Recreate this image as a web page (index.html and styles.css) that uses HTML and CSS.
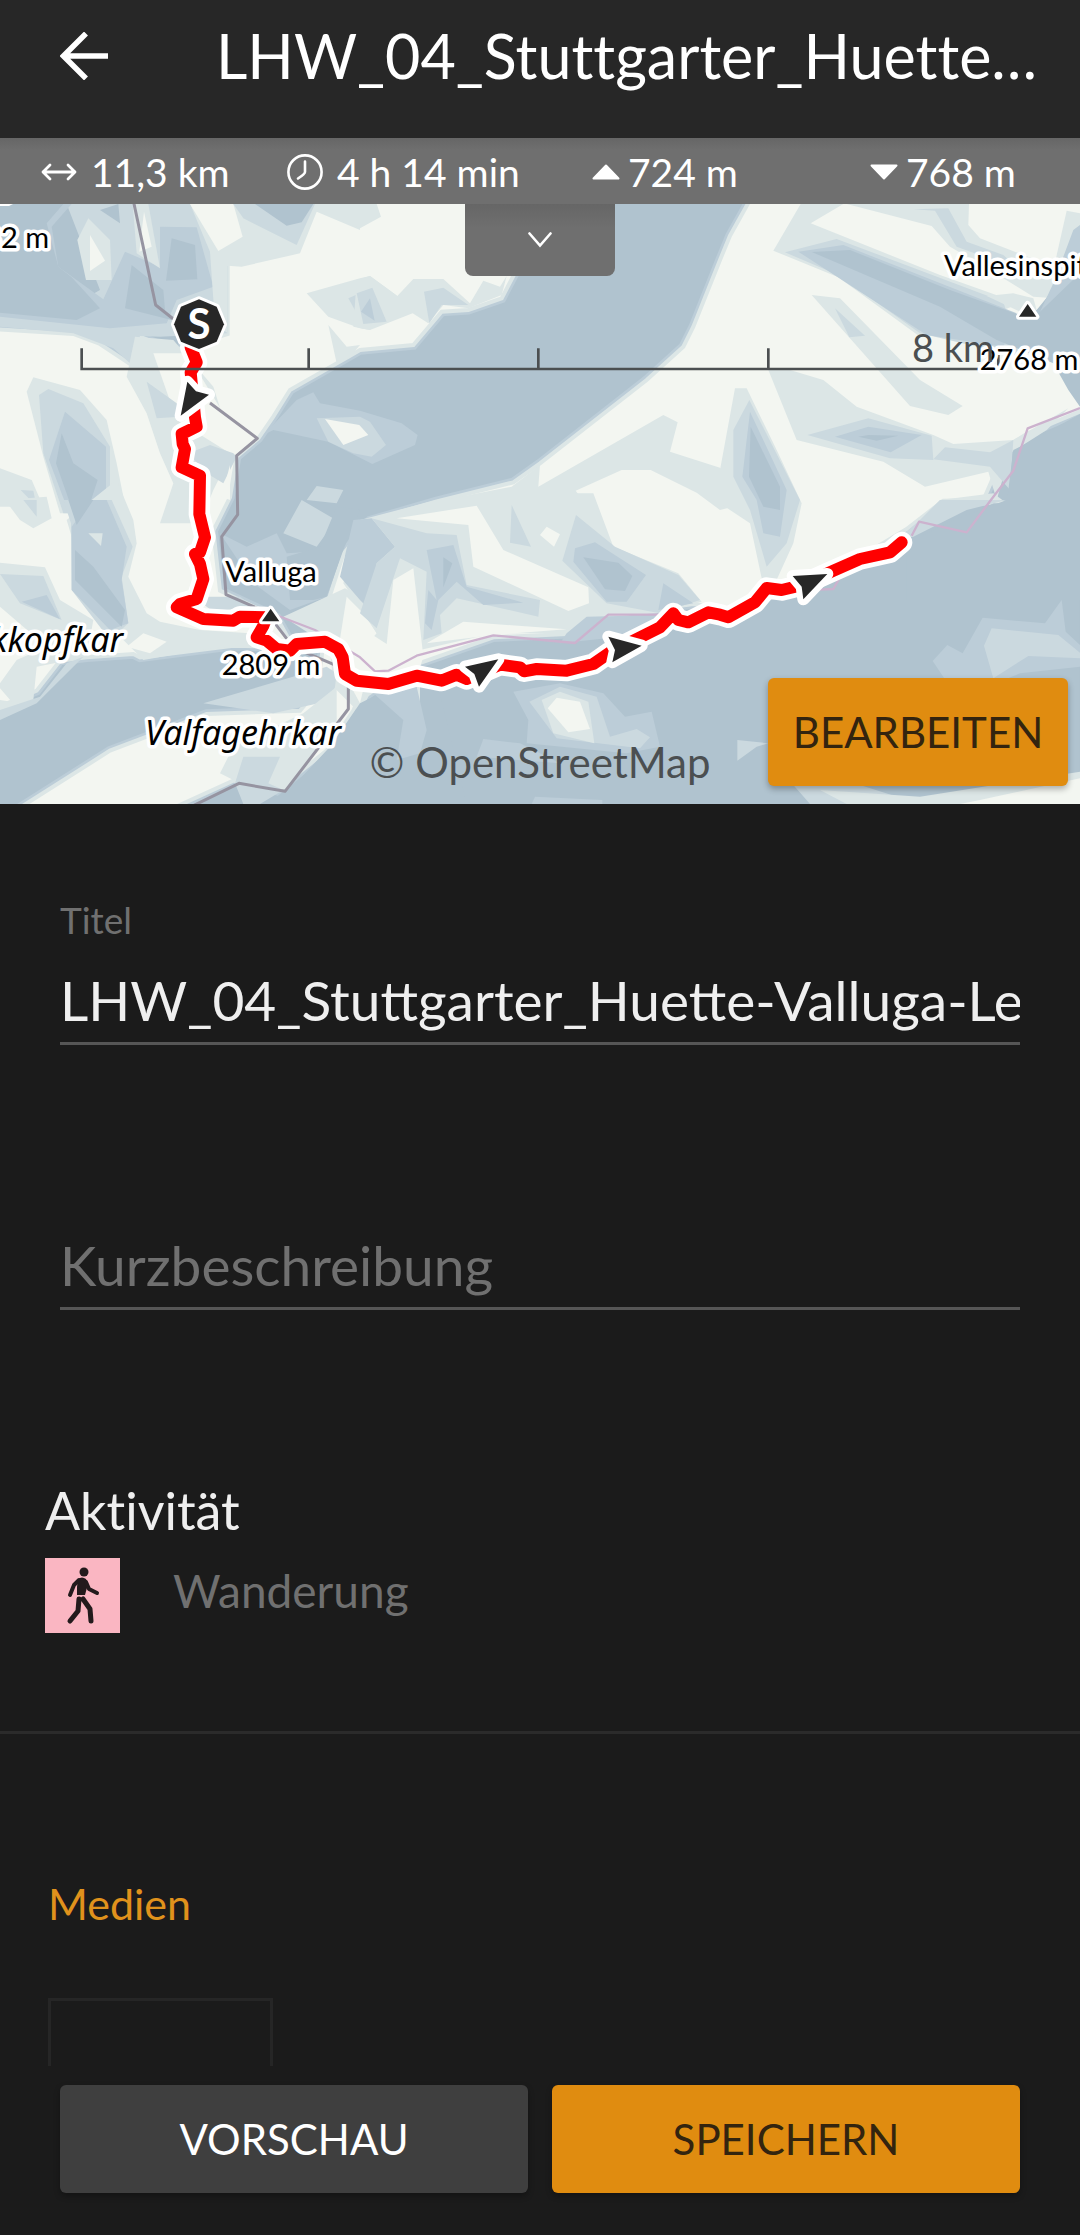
FILE: index.html
```
<!DOCTYPE html>
<html lang="de">
<head>
  <meta charset="UTF-8">
  <meta name="viewport" content="width=device-width, initial-scale=1.0">
  <title>Tour bearbeiten</title>
  <link rel="stylesheet" href="styles.css">
</head>
<body>
  <header class="topbar">
    <button class="back" type="button" aria-label="Zurück">
      <svg viewBox="0 0 48 48" width="48" height="48"><path d="M26 1.500 3.500 24 26 46.500M3.500 24H48" fill="none" stroke="#fff" stroke-width="5.500"/></svg>
    </button>
    <h1>LHW_04_Stuttgarter_Huette-Valluga-Leutkircher_Huette</h1>
  </header>

  <ul class="stats">
    <li>
      <svg class="icon-wide" viewBox="0 0 36 18" width="36" height="18"><path d="M9 2 2 9l7 7M27 2l7 7-7 7M2 9h32" fill="none" stroke="#fff" stroke-width="2.800" stroke-linecap="round" stroke-linejoin="round"/></svg>
      11,3 km
    </li>
    <li>
      <svg class="icon-wide" viewBox="0 0 36 36" width="36" height="36"><circle cx="18" cy="18" r="16.600" fill="none" stroke="#fff" stroke-width="2.600"/><path d="M18 7.500V18q0 2-7 6.500" fill="none" stroke="#fff" stroke-width="2.600" stroke-linecap="round"/></svg>
      4 h 14 min
    </li>
    <li>
      <svg viewBox="0 0 28 16" width="28" height="16"><path d="M14 1.500 26.500 14.500H1.500z" fill="#fff" stroke="#fff" stroke-width="2" stroke-linejoin="round"/></svg>
      724 m
    </li>
    <li>
      <svg viewBox="0 0 28 16" width="28" height="16"><path d="M14 14.500 26.500 1.500H1.500z" fill="#fff" stroke="#fff" stroke-width="2" stroke-linejoin="round"/></svg>
      768 m
    </li>
  </ul>

  <section class="map">
    <svg class="map-canvas" viewBox="0 0 1080 600" preserveAspectRatio="xMidYMid slice" role="img" aria-label="Karte der Tour">
      <defs>
        <path id="land-west" d="M-30 375 220 390 300 420 390 480 420 398 520 440 683 390 683 185 640 100 570-30H1400L1540 216 1505 283 1405 318 1325 323 1240 423 1080 438 1045 458 870 558 820 638 775 703 710 758 690 880 640 980 660 1160 830 1240 880 1330 700 1325 420 1360 400 1350 260 1360 180 1370 110 1460-30 1520z"/>
        <path id="land-east" d="M985 1190 1030 1050 1110 950 1310 892 1540 835 1620 778 1940 528 2050 428 2080 368 2160 168 2190 95 2260-30H3270V610L3080 690 3020 728 2950 888 2830 890 2720 975 2520 1095 2290 1160 2180 1215 2080 1200 1900 1225 1820 1240 1700 1290 1480 1300 1250 1380 1240 1400 1260 1480 1240 1540 1180 1450 1120 1460 1060 1500 1000 1440 960 1400z"/>
        <path id="land-south" d="M30 1830 330 1640 620 1530 900 1520 1000 1400 1080 1470 1060 1520 980 1640 830 1760 700 1730 480 1830z"/>
        <path id="route" d="M572 430 590 475 572 505 585 640 590 668 545 690 548 720 555 735 545 790 600 815 598 930 615 1000 600 1045 585 1050 600 1080 610 1125 590 1185 540 1200 530 1210 610 1245 700 1250 720 1238 800 1240 790 1265 770 1300 800 1310 830 1335 870 1340 890 1320 975 1313 1015 1335 1028 1360 1035 1410 1070 1430 1165 1440 1250 1415 1325 1430 1370 1412 1400 1425 1500 1382 1560 1390 1572 1402 1610 1395 1700 1400 1780 1380 1830 1345 1920 1300 1980 1270 2020 1228 2035 1248 2065 1255 2125 1225 2160 1232 2185 1240 2265 1195 2300 1152 2345 1158 2400 1145 2500 1100 2580 1065 2670 1045 2705 1015"/>
      </defs>

      <!-- terrain, drawn at three units per pixel -->
      <g transform="scale(.333333)">
        <path class="t4" d="M0 0H3240V1800H0z"/>
        <g class="edge-outer"><use href="#land-west"/><use href="#land-east"/><use href="#land-south"/></g>
        <g class="edge-inner"><use href="#land-west"/><use href="#land-east"/><use href="#land-south"/></g>

        <!-- north west -->
        <g transform="translate(0 -42)">
          <path class="t2" d="M200 42H570L630 170 683 227V430L480 440 420 438 390 520 340 475 220 430 0 410V360L220 345 300 300z"/>
          <path class="t3" d="M0 42H215L155 110 175 230 310 328 375 185 480 230V110L590 112 640 290 530 330 500 400 330 415 0 380z"/>
          <path class="t4" d="M0 42H190L140 100 175 230 215 262 300 355 230 390 0 368z"/>
          <path class="t4" d="M300 60 355 42 360 100zM395 225 490 300 495 360 515 390 375 355zM515 145 585 165 592 268 498 272z"/>
          <path class="t1" d="M265 85 330 150 335 270H258L232 150z"/>
          <path class="t0" d="M270 135 315 212 270 243z"/>
          <path class="t1" d="M398 42H445L480 235 410 190z"/>
          <path class="t0" d="M432 65 455 170 418 185z"/>
          <path class="t1" d="M570 42 630 185 645 400 683 430V227L725 230 900 190 950 65 1080 120V42H720z"/>
          <path class="t0" d="M570 42H700L728 140 655 183z"/>
          <path class="t2" d="M700 42 730 85 890 165 945 42z"/>
          <path class="t4" d="M765 42 860 107 905 97 940 42z"/>
          <path class="t1" d="M920 310 1080 265 1110 258 1192 318 1160 370 1110 420 1080 415 985 380zM985 405 1040 470 1080 465 1050 500 1010 520z"/>
          <path class="t2" d="M1045 325 1117 293 1160 395 1090 402 1070 370z"/>
          <path class="t1" d="M405 440 520 450 640 590 700 780 640 900 600 1000H480L520 880 480 790 440 670 380 560z"/>
          <path class="t0" d="M460 490H560L640 620 735 780 690 790 530 690z"/>
          <path class="t2" d="M440 575 530 640 540 680 470 685zM565 790 630 765 700 790 710 800 670 880 620 850z"/>
          <path class="t0" d="M690 825V930L665 920z"/>
          <path class="t1" d="M100 562 240 600 320 690 350 820 380 970H180L130 800 80 605z"/>
          <path class="t2" d="M145 597 250 640 330 770V970H190L130 790 117 615z"/>
          <path class="t3" d="M195 665 318 770V950H200L147 810z"/>
          <path class="t4" d="M185 730 220 820 293 870 270 940H210L168 820z"/>
          <path class="t1" d="M0 835 95 870 130 950H0z"/>
          <path class="t2" d="M62 900 100 902 110 950z"/>
          <path class="t3" d="M790 735 890 630 940 607 960 640 1080 662 1205 700 1253 735 1245 765 1117 822 985 755 820 720z"/>
          <path class="t2" d="M950 685 1080 680 1110 695 1158 765 1115 800 1060 790 985 755zM920 930 950 888 1030 900 1010 940z"/>
          <path class="t0" d="M975 687 1078 705 1105 735 1030 765z"/>
        </g>

        <!-- north, the wide valley -->
        <g transform="translate(1080 -42)">
          <path class="t1" d="M-60 42H50L63 80 0 115-60 90zM-10 270 30 258 112 318 160 267H250L330 340 370 272 420 290 440 258 425 315 325 355 250 345 205 400 158 370 30 420-20 410z"/>
          <path class="t2" d="M-10 310 37 293 80 395 10 402zM192 305 250 293 325 345 245 345 208 400z"/>
          <path class="t3" d="M3 365 30 325 44 392z"/>
          <path class="t1" d="M535 890 910 675 953 697 930 785 1080 833 1200 930 1080 960 1010 908 872 840H785L647 902 720 1000H300L250 930 455 890 540 825z"/>
        </g>

        <!-- north east -->
        <g transform="translate(2160 -42)">
          <path class="t1" d="M242 42H370L272 100 660 255 900 340 850 360 600 440 355 262 160 182z"/>
          <path class="t1" d="M380 42H747L745 105 780 145 1080 260V330L940 320 810 240 690 170 635 108z"/>
          <path class="t2" d="M580 58 685 55 740 155 850 195 900 240 710 170 645 62zM195 187 350 147 850 335 900 500 600 430 355 255z"/>
          <path class="t3" d="M235 185 370 165 890 370 850 470 620 435z"/>
          <path class="t4" d="M275 186 390 180 690 300 890 372 950 360 1080 200V650L1045 600 1000 520 830 450 660 350z"/>
          <path class="t1" d="M1040 62 1080 70V150L1000 240z"/>
          <path class="t3" d="M1060 120 1080 105V250L960 365 1000 280z"/>
          <path class="t1" d="M800 318 880 310 940 325 950 360 900 365z"/>
          <path class="t1" d="M275 315 360 325 600 570 728 648 685 675 570 648z"/>
          <path class="t2" d="M345 355 435 437 388 442z"/>
          <path class="t1" d="M145 540H210L310 570 410 650 640 735 700 762 880 750 1045 655 980 720 870 790 830 930 805 845 615 890 490 815 230 750z"/>
          <path class="t2" d="M262 735 445 685 635 737 640 810 510 805zM640 808 675 772 810 787 880 750 870 900 810 830z"/>
          <path class="t3" d="M345 740 445 710 605 735 512 787z"/>
          <path class="t4" d="M415 740 445 735 535 737 470 752z"/>
          <path class="t1" d="M45 595H80L170 780 245 940 220 1060 140 1235 90 1000 0 940V840z"/>
          <path class="t2" d="M88 630 240 930 200 1060 140 1130 90 960 40 860V720z"/>
          <path class="t3" d="M90 665 200 900 180 1040 130 1030 110 930 67 860z"/>
          <path class="t4" d="M92 710 180 890V960L130 950 87 860z"/>
          <path class="t1" d="M660 930 820 910 860 940 640 960z"/>
          <path class="t4" d="M860 940 880 780 920 760 1080 672V1000H700L820 940z"/>
        </g>

        <!-- south west -->
        <g transform="translate(0 888)">
          <path class="t1" d="M15 0 60 60 100 85 155 55 140-10zM0 188 135 202 180 300 280 360 260 470 110 500 100 600 0 650V600L35 605 0 565V550L50 480 140 440 0 320zM350-60 400 60 410 130 385 230 440 340 480 365 600 390 750 400 850 420 600 450 430 480 370 420 280 330 200 60z"/>
          <path class="t0" d="M380 440 430 400 500 425 450 460z"/>
          <path class="t2" d="M70 0H110V50zM0 222 130 228 185 360 60 310zM190 0H335L398 140 365 230 385 370 330 420 215 270 213 70z"/>
          <path class="t3" d="M65 305 140 285 180 358zM215 80 275 0 320 0 380 140 365 240 385 370 330 390 215 270z"/>
          <path class="t4" d="M205 0H280L230 75zM225 150 280 200 375 330 365 380 225 240z"/>
          <path class="t1" d="M265 100H308L303 138z"/>
          <path class="t3" d="M660 100 740 140 830 100 860 160 1028 150 980 290 870 330 760 250z"/>
          <path class="t2" d="M905 0 1008 60 950 140 850 100zM580 290H720L760 320 640 335z"/>
          <path class="t4" d="M1010 20 1080 30 1030 150 980 290 940 300 870 300 860 170 960 140z"/>
          <path class="t1" d="M1035 265 1150 330V500L1080 640 1000 560 990 440 850 350z"/>
          <path class="t0" d="M1040 290 1100 350 1130 400 1080 610 1010 480z"/>
          <path class="t2" d="M0 630 120 590 200 490 250 470 110 610 0 660zM610 610 980 500 1010 520 1000 600 820 640z"/>
          <path class="t1" d="M660 820 700 740 910 640 1010 560 1010 680 860 870 700 840z"/>
          <path class="t2" d="M730 770 840 770 805 850 850 870 780 912H730L705 850z"/>
          <path class="t4" d="M1080 610 1300 500 1400 912H830L990 740z"/>
        </g>

        <!-- south, up to the ridge -->
        <g transform="translate(1080 888)">
          <path class="t1" d="M0 60 230 0 400-20H700L760 140 955 220 1025 305 890 340 750 350 620 400 400 400 180 450 180 620 80 520-40 500 50 400-50 250z"/>
          <path class="t3" d="M-20 60 35 55 105 140 50 190 35 335 0 300-60 230z"/>
          <path class="t2" d="M35 55 200 100 290 105 320 255 540 300 535 350 290 295 240 345 245 400 190 420 200 215 120 175 50 385 0 340 50 190 105 140z"/>
          <path class="t0" d="M100 240 160 205 190 470 150 600 90 560 40 570-50 480 0 380 80 432z"/>
          <path class="t3" d="M200 150 280 135 320 260 490 308 370 315 290 245 235 300 215 390 195 370 205 270 230 300z"/>
          <path class="t4" d="M250 172 277 190 250 262z"/>
          <path class="t0" d="M110 55 350 17 430 150 685 262 687 310 625 333 340 200 325 75zM560 80 600 103 582 140 540 105zM200 430 310 365 620 388 400 405z"/>
          <path class="t2" d="M455 15 513 140 450 128zM648 45 765 140 955 225 1020 300 900 340 740 310 607 182z"/>
          <path class="t3" d="M645 145 705 127 858 225 800 305H740L640 185zM910 250 1000 310 895 330zM620 400 680 350 900 345 880 400 600 430z"/>
          <path class="t4" d="M670 172 775 188 817 228 795 273 735 268z"/>
          <path class="t3" d="M460 575 600 550 730 580 795 650 875 635 900 740 800 760 500 730 505 660zM40 580 170 560 200 690 180 760 110 780 130 660zM350 770 370 717 480 730 600 790z"/>
          <path class="t2" d="M508 605 600 560 710 590 750 710 830 687 870 712 840 745 590 715z"/>
          <path class="t1" d="M545 600 600 575 685 605 703 730 580 700z"/>
          <path class="t0" d="M563 625 590 593 660 605 690 687 625 697z"/>
          <path class="t3" d="M515 912 525 890 727 900V912z"/>
        </g>

        <!-- south east -->
        <g transform="translate(2160 888)">
          <path class="t2" d="M660 0H860L740 30 580 110 530 120 600 60z"/>
          <path class="t4" d="M860 0H1080V300H560V130L700 60z"/>
          <path class="t3" d="M638 483 682 435 728 460 788 353 975 370 1025 300 1037 395 1080 435V500L900 520 800 560H690z"/>
          <path class="t2" d="M815 385 1015 405 1080 458V475L925 468 820 535 792 437zM52 720 145 730 110 740 52 782z"/>
          <path class="t2" d="M220 855H420L600 912H270z"/>
          <path class="t1" d="M300 870 600 890 1080 815V912H380z"/>
          <path class="t0" d="M780 900 1080 835V912H720z"/>
        </g>
      </g>

      <!-- boundaries, cable cars and the route -->
      <g transform="scale(.333333)" fill="none" stroke-linejoin="round">
        <path class="boundary" d="M400-10 467 303 520 345M630 597 772 703 710 755 713 932 665 998 678 1172 800 1225 880 1330 1045 1400V1515L855 1762 717 1738 580 1805"/>
        <path class="ridge" d="M820 1230 945 1278 1080 1360 1125 1402 1165 1400 1250 1355 1480 1294 1725 1317 1825 1232H2000M2460 1157 2500 1155 2520 1120M2735 995 2757 953 2900 985 2975 885 3040 800 3083 673 3240 612"/>
        <use class="route-casing" href="#route"/>
        <use class="route-line" href="#route"/>
        <path class="scale-line" d="M245 433V495H2995V433M926 433V495M1615 433V495M2305 433V495"/>
        <path class="arrow" d="M562 533 588 562 627 572 542 635zM1395 1388 1495 1366 1437 1448 1423 1410zM1825 1298 1925 1325 1837 1375 1845 1338zM2378 1116 2482 1110 2410 1186 2405 1148z"/>
        <path class="peak" d="M812 1214 838 1252H786zM3083 300 3109 338H3057z"/>
        <path class="start" d="M597 286 650 308 672 361 650 413 597 435 543 413 522 361 543 308z"/>
      </g>
      <text class="start-label" x="199" y="135" text-anchor="middle">S</text>

      <g class="place">
        <text x="49" y="44" text-anchor="end">2632 m</text>
        <text x="271" y="378" text-anchor="middle">Valluga</text>
        <text x="271" y="471" text-anchor="middle">2809 m</text>
        <text x="944" y="72">Vallesinspitze</text>
        <text x="1029" y="166" text-anchor="middle">2768 m</text>
      </g>
      <g class="place field">
        <text x="123" y="448" text-anchor="end">Stockkopfkar</text>
        <text x="243" y="541" text-anchor="middle">Valfagehrkar</text>
      </g>
      <path d="M0 0H13L9 2H0z" fill="#fff"/>
      <text class="map-note small" x="912" y="158">8 km</text>
      <text class="map-note" x="540" y="574" text-anchor="middle">© OpenStreetMap</text>
    </svg>

    <button class="pull-tab" type="button" aria-label="Details anzeigen">
      <svg viewBox="0 0 24 16" width="24" height="16"><path d="M1.500 1.500 12 13.500 22.500 1.500" fill="none" stroke="#fff" stroke-width="2.600" stroke-linecap="round"/></svg>
    </button>
    <button class="btn btn-primary edit" type="button">BEARBEITEN</button>
  </section>

  <main class="content">
    <form class="fields" id="tour">
      <label for="titel">Titel</label>
      <input type="text" id="titel" value="LHW_04_Stuttgarter_Huette-Valluga-Leutkircher_Huette">
      <input type="text" id="kurz" placeholder="Kurzbeschreibung" aria-label="Kurzbeschreibung">
    </form>

    <section class="activity">
      <h2>Aktivität</h2>
      <div class="activity-row">
        <svg viewBox="0 0 75 75" width="75" height="75">
          <path d="M0 0H75V75H0z" fill="#fab6c2"/>
          <circle cx="39" cy="14" r="4.500" fill="#231a1c"/>
          <path d="M33 21q4-3 8 0l2 5-3 11h-8V29z" fill="#231a1c"/>
          <path d="M34 22 29 27 25 37M41 24 44 31 52 35" fill="none" stroke="#231a1c" stroke-width="4" stroke-linecap="round" stroke-linejoin="round"/>
          <path d="M34 41 33 53 25 63M38 41 45 51 46 63" fill="none" stroke="#231a1c" stroke-width="5" stroke-linecap="round" stroke-linejoin="round"/>
        </svg>
        <span>Wanderung</span>
      </div>
    </section>

    <section class="media">
      <h2>Medien</h2>
      <div class="media-slot"></div>
    </section>
  </main>

  <footer class="actions">
    <button class="btn btn-dark" type="button">VORSCHAU</button>
    <button class="btn btn-primary" type="submit" form="tour">SPEICHERN</button>
  </footer>
</body>
</html>
```
FILE: styles.css
```
* {
  box-sizing: border-box;
}
body {
  margin: 0;
  height: 100vh;
  display: flex;
  flex-direction: column;
  background-color: #1b1b1b;
  color: #efefef;
  font-family: Lato, sans-serif;
  font-variant-ligatures: none;
}
h1, h2 {
  margin: 0;
  font-weight: normal;
}
button {
  font-family: inherit;
  border: none;
  cursor: pointer;
}
svg {
  display: block;
  flex: none;
}

/* top bar */
.topbar {
  display: flex;
  align-items: center;
  gap: 108px;
  padding: 16px 24px 42px 60px;
  background-color: #272727;
  color: #fff;
}
.back {
  padding: 0;
  background: none;
}
.topbar h1 {
  flex: 1;
  min-width: 0;
  font-size: 61px;
  line-height: 80px;
  white-space: nowrap;
  overflow: hidden;
  text-overflow: ellipsis;
}

/* tour numbers */
.stats {
  display: grid;
  grid-template-columns: 246fr 305fr 278fr 210fr;
  margin: 0;
  padding: 4px 0 2px 41px;
  list-style: none;
  background: linear-gradient(#666, #6f6f6f 12px);
  color: #fff;
  font-size: 39px;
  line-height: 60px;
}
.stats li {
  display: flex;
  align-items: center;
  gap: 8px;
  white-space: nowrap;
}
.icon-wide {
  margin-right: 6px;
}

/* map */
.map {
  position: relative;
  overflow: hidden;
}
.map-canvas {
  width: 100%;
  height: 600px;
}
.t0 { fill: #f3f6f1; }
.t1 { fill: #dce6e6; }
.t2 { fill: #cbd9df; }
.t3 { fill: #bccdd8; }
.t4 { fill: #b0c3cf; }
.edge-outer {
  fill: #bccdd8;
  stroke: #bccdd8;
  stroke-width: 28;
}
.edge-inner {
  fill: #f3f6f1;
  stroke: #dce6e6;
  stroke-width: 12;
}
.boundary {
  stroke: #9694a1;
  stroke-width: 9;
}
.ridge {
  stroke: #ccb2ce;
  stroke-width: 7;
}
.route-casing {
  stroke: #fff;
  stroke-width: 64;
  stroke-linecap: round;
}
.route-line {
  stroke: #f00;
  stroke-width: 36;
  stroke-linecap: round;
}
.scale-line {
  stroke: #4b4f51;
  stroke-width: 8;
  stroke-linejoin: miter;
}
.arrow,
.peak,
.start {
  fill: #272727;
  stroke: #fff;
  stroke-width: 36;
  paint-order: stroke;
}
.peak,
.start {
  stroke-width: 18;
}
.start-label {
  fill: #fff;
  font-size: 42px;
  font-weight: bold;
}
.place {
  fill: #000;
  stroke: #fff;
  stroke-width: 7px;
  stroke-linejoin: round;
  paint-order: stroke;
  font-size: 29px;
}
.field {
  font-family: "Noto Sans", sans-serif;
  font-size: 34px;
  font-style: italic;
}
.map-note {
  fill: #4b4f51;
  font-size: 42px;
}
.small {
  font-size: 38px;
}
.pull-tab {
  position: absolute;
  top: 0;
  left: 50%;
  width: 150px;
  height: 72px;
  margin-left: -75px;
  display: flex;
  align-items: center;
  justify-content: center;
  border-radius: 0 0 8px 8px;
  background: linear-gradient(#666, #6f6f6f 24px);
}

/* buttons */
.btn {
  height: 108px;
  padding: 4px 24px;
  border-radius: 6px;
  font-size: 42px;
  box-shadow: 0 3px 6px rgba(0, 0, 0, 0.3);
}
.btn-primary {
  background-color: #e08c10;
  color: #33240f;
}
.btn-dark {
  background-color: #3f3f3f;
  color: #fff;
}
.edit {
  position: absolute;
  right: 12px;
  bottom: 18px;
  width: 300px;
}

/* form */
.content {
  flex: 1;
  min-height: 0;
  overflow: hidden;
}
.fields {
  display: flex;
  flex-direction: column;
  padding: 92px 60px 0;
}
.fields label {
  color: #707070;
  font-size: 37px;
  line-height: 48px;
}
.fields input {
  width: 100%;
  height: 101px;
  padding: 14px 0 0;
  border: none;
  border-bottom: 3px solid #565656;
  background: none;
  color: #efefef;
  font-family: inherit;
  font-size: 55px;
  outline: none;
}
.fields input + input {
  margin-top: 164px;
}
.fields input::placeholder {
  color: #707070;
  opacity: 1;
}
.activity {
  padding: 164px 45px 98px;
  border-bottom: 3px solid #2b2b2b;
}
.activity h2 {
  font-size: 52px;
  line-height: 72px;
}
.activity-row {
  display: flex;
  align-items: flex-start;
  gap: 53px;
  margin-top: 12px;
  color: #707070;
  font-size: 46px;
  line-height: 66px;
}
.media {
  padding: 140px 48px 0;
}
.media h2 {
  color: #e0921c;
  font-size: 43px;
  line-height: 60px;
}
.media-slot {
  width: 225px;
  height: 225px;
  margin-top: 64px;
  border: 3px solid #262626;
}

/* bottom actions */
.actions {
  display: flex;
  gap: 24px;
  padding: 19px 60px 42px;
}
.actions .btn {
  flex: 1;
}
```
